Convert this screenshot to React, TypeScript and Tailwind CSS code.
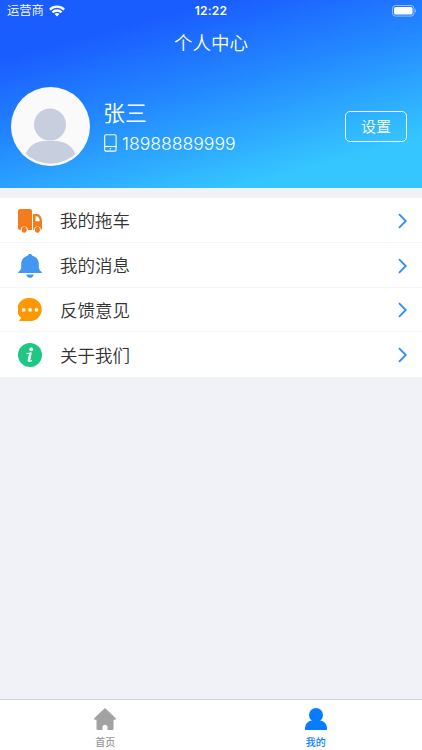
import type { ReactNode } from "react";

function WifiIcon() {
  return (
    <svg width="16" height="12" viewBox="0 0 16 12" fill="none" stroke="white" strokeWidth="2.3">
      <path d="M.9 4.600a10 10 0 0 1 14.200 0" />
      <path d="M3.500 7.400a6.300 6.300 0 0 1 9 0" />
      <path d="M8 11.500 5.600 9.100a3.400 3.400 0 0 1 4.800 0z" fill="white" stroke="none" />
    </svg>
  );
}

function BatteryIcon() {
  return (
    <svg width="25" height="12" viewBox="0 0 25 12">
      <rect x="0.5" y="0.5" width="21.5" height="10.6" rx="3" fill="none" stroke="white" strokeOpacity=".5" />
      <rect x="2" y="2" width="18.5" height="7.6" rx="1.6" fill="white" />
      <path d="M23.200 4c1.300.4 1.300 3.200 0 3.600z" fill="white" fillOpacity=".6" />
    </svg>
  );
}

function Avatar() {
  return (
    <svg width="79" height="79" viewBox="0 0 79 79">
      <defs>
        <clipPath id="avatar-clip">
          <circle cx="39.5" cy="39.5" r="37.2" />
        </clipPath>
      </defs>
      <circle cx="39.5" cy="39.5" r="39.5" fill="#fafafa" />
      <g fill="#c7cedd" clipPath="url(#avatar-clip)">
        <circle cx="39" cy="37.6" r="16" />
        <path d="M14 69C17 59 25 54 34 54h10c10 0 18 5 21 15v10H14z" />
      </g>
    </svg>
  );
}

function PhoneIcon() {
  return (
    <svg width="13" height="18" viewBox="0 0 13 18" fill="none" stroke="white" strokeWidth="1.1">
      <rect x="0.7" y="0.7" width="11.4" height="16.4" rx="1.3" />
      <path d="M1 12.5h11" />
      <circle cx="6.4" cy="14.8" r=".8" fill="white" stroke="none" />
    </svg>
  );
}

function TruckIcon() {
  return (
    <svg width="24" height="24" viewBox="0 0 24 24">
      <path
        fill="#f57c1c"
        fillRule="evenodd"
        d="M2 0h10q2 0 2 2v19H9.800a3.600 3.600 0 0 0-7.200 0H2q-2 0-2-2V2q0-2 2-2zM15 5h4.500c2.500 0 4.500 4 4.500 7.500V19q0 2-1.200 2a3.400 3.400 0 0 0-6.800 0h-1zm2.500 2.200v5.100h4.300C21.600 9.500 20.500 7.200 19 7.200z"
      />
      <ellipse cx="6.200" cy="20.700" rx="2.500" ry="3" fill="#f57c1c" />
      <ellipse cx="19.400" cy="20.700" rx="2.500" ry="3" fill="#f57c1c" />
    </svg>
  );
}

function BellIcon() {
  return (
    <svg width="24" height="24" viewBox="0 0 24 24" fill="#4497f1">
      <path d="M12 0c1.300 0 2 .6 2.300 1.700C18.500 2.800 20.800 6 20.800 10v2.500c0 2.500.7 3.900 2.700 5.200.8.600.6 1.300-.5 1.300H1c-1.100 0-1.300-.7-.5-1.300 2-1.300 2.700-2.700 2.700-5.200V10c0-4 2.300-7.200 6.500-8.300C10 .6 10.700 0 12 0z" />
      <path d="M8.200 20.400h7.600c-.5 2.200-2 3.400-3.800 3.400s-3.300-1.200-3.800-3.400z" />
    </svg>
  );
}

function ChatIcon() {
  return (
    <svg width="24" height="24" viewBox="0 0 24 24">
      <path fill="#ff9800" d="M12 0a11.700 11.500 0 1 1 0 23H1.700c-.7 0-.8-.6-.3-1L3.200 20.100A11.500 11.500 0 0 1 12 0z" />
      <g fill="white">
        <circle cx="5.700" cy="11.800" r="1.900" />
        <circle cx="12.100" cy="11.800" r="1.900" />
        <circle cx="18.500" cy="11.800" r="1.900" />
      </g>
    </svg>
  );
}

function InfoIcon() {
  return (
    <svg width="24" height="24" viewBox="0 0 24 24">
      <circle cx="12" cy="12" r="12" fill="#1fc784" />
      <circle cx="13.200" cy="6.300" r="1.900" fill="white" />
      <path d="M9 10.500c1.200 0 3-.2 4-.7l-1.800 7.300c-.4 1.700.8 1.600 2.300.6" fill="none" stroke="white" strokeWidth="1.200" strokeLinecap="round" strokeLinejoin="round" />
      <path d="M12.200 11 10.900 17.500" stroke="white" strokeWidth="2.400" strokeLinecap="round" />
    </svg>
  );
}

const rows: { label: string; icon: ReactNode }[] = [
  { label: "我的拖车", icon: <TruckIcon /> },
  { label: "我的消息", icon: <BellIcon /> },
  { label: "反馈意见", icon: <ChatIcon /> },
  { label: "关于我们", icon: <InfoIcon /> },
];

export default function App() {
  return (
    <div className="flex h-[750px] w-[422px] flex-col overflow-hidden bg-[#f1f2f7] font-['Inter','Noto_Sans_CJK_SC',sans-serif]">
      <header className="h-[188px] shrink-0 bg-[linear-gradient(165deg,#1a5dff_20%,#2389ff_48%,#35c5ff_83%)] text-white">
        <div className="grid h-[22px] grid-cols-3 items-center pr-[5px] pl-[7px]">
          <div className="flex items-center gap-[5px] text-[12.3px] leading-none font-[350]">
            <span className="pt-px">运营商</span>
            <WifiIcon />
          </div>
          <span className="pr-[2px] text-center text-[12px] leading-none font-semibold tracking-[0.2px]">12:22</span>
          <div className="flex justify-end">
            <BatteryIcon />
          </div>
        </div>
        <h1 className="h-[43px] text-center text-[18.5px] leading-[43px] font-[350]">个人中心</h1>
        <div className="mt-[22px] flex h-[79px] items-center pr-[15px] pl-[11px]">
          <Avatar />
          <div className="ml-[14px] flex-1">
            <div className="-ml-px text-[22px] leading-[28px] font-[350]">张三</div>
            <div className="mt-[5px] flex h-[22px] items-center gap-[5px]">
              <PhoneIcon />
              <span className="pt-px text-[17.6px] leading-none font-light">18988889999</span>
            </div>
          </div>
          <button className="h-[31px] w-[62px] rounded-[5px] border border-white/90 text-[15px] leading-[29px] font-[350]">设置</button>
        </div>
      </header>

      <main className="mt-[10px] bg-white">
        {rows.map(({ label, icon }) => (
          <div key={label} className="flex h-[44.8px] items-center border-b border-[#f5f5f7] pt-[2px] pr-[15px] pl-[18px] last:border-transparent">
            {icon}
            <span className="ml-[18px] flex-1 text-[17.5px] leading-none font-[350] text-[#333]">{label}</span>
            <svg width="9" height="16" viewBox="0 0 9 16" fill="none" stroke="#2e8cf5" strokeWidth="1.8">
              <path d="m1 1.200 6.800 6.800L1 14.800" />
            </svg>
          </div>
        ))}
      </main>

      <nav className="mt-auto grid h-[51px] grid-cols-2 border-t border-[#d2d4d9] bg-white pr-px text-[10px] leading-[14px] font-medium">
        <div className="flex flex-col items-center pt-[8px] text-[#999]">
          <svg width="24" height="22" viewBox="0 0 24 22" fill="#a2a2a2">
            <path d="M12 0 23 10.500l-.6 1.200H20.500V21q0 1-1 1h-5v-2.800a2.500 2.500 0 0 0-5 0V22h-5q-1 0-1-1v-9.300H1.600L1 10.500z" />
          </svg>
          <span className="mt-[5px]">首页</span>
        </div>
        <div className="flex flex-col items-center pt-[8px] text-[#087cff]">
          <svg width="22" height="22" viewBox="0 0 22 22" fill="#087cff">
            <circle cx="11" cy="7" r="7" />
            <path d="M0 22v-1.500c0-4.500 3-7.500 7-8h8c4 .5 7 3.500 7 8V22z" />
          </svg>
          <span className="mt-[5px]">我的</span>
        </div>
      </nav>
    </div>
  );
}
